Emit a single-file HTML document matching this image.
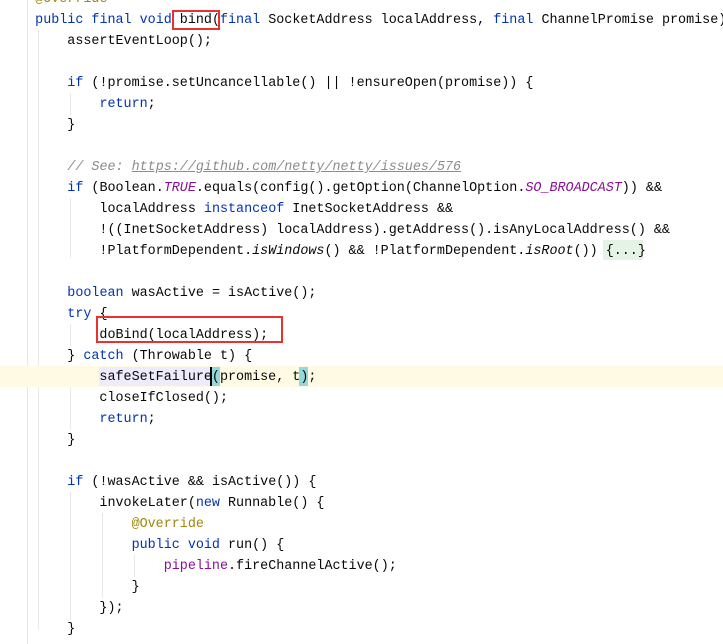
<!DOCTYPE html>
<html><head><style>
body{margin:0;width:723px;height:644px;background:#fff;overflow:hidden;position:relative;font-family:"Liberation Mono",monospace;font-size:13.4px;color:#080808}
.l{position:absolute;left:3px;height:21px;line-height:21px;white-space:pre;margin-top:1px}
.k{color:#0033b3}.a{color:#9e880d}.c{color:#8c8c8c;font-style:italic}.u{text-decoration:underline}
.s{color:#871094;font-style:italic}.i{font-style:italic}.p{color:#871094}
.g{position:absolute;width:1px;background:#e8e8e8}
.box{position:absolute;border:2px solid #e8322f;box-sizing:border-box}
</style></head><body>
<div class="g" style="left:27px;top:0;height:644px"></div>
<div class="g" style="left:38px;top:30px;height:600px"></div>
<div class="g" style="left:70px;top:93px;height:22px"></div>
<div class="g" style="left:70px;top:198px;height:60px"></div>
<div class="g" style="left:70px;top:324px;height:22px"></div>
<div class="g" style="left:70px;top:366px;height:64px"></div>
<div class="g" style="left:70px;top:492px;height:128px"></div>
<div class="g" style="left:102px;top:513px;height:85px"></div>
<div class="g" style="left:134px;top:555px;height:22px"></div>
<div style="position:absolute;left:0;top:366px;width:723px;height:21px;background:#fffae3"></div>
<div style="position:absolute;left:99px;top:367px;width:112px;height:19px;background:#edebfc"></div>
<div style="position:absolute;left:211px;top:367px;width:9px;height:19px;background:#93d9d9"></div>
<div style="position:absolute;left:299px;top:367px;width:9px;height:19px;background:#93d9d9"></div>
<div style="position:absolute;left:210px;top:367px;width:2px;height:19px;background:#000"></div>
<div style="position:absolute;left:603px;top:240px;width:40px;height:20px;background:#e5f3e6"></div>
<div class="l" style="top:-12px">    <span class="a">@Override</span></div>
<div class="l" style="top:9px">    <span class="k">public final void</span> bind(<span class="k">final</span> SocketAddress localAddress, <span class="k">final</span> ChannelPromise promise) {</div>
<div class="l" style="top:30px">        assertEventLoop();</div>
<div class="l" style="top:72px">        <span class="k">if</span> (!promise.setUncancellable() || !ensureOpen(promise)) {</div>
<div class="l" style="top:93px">            <span class="k">return</span>;</div>
<div class="l" style="top:114px">        }</div>
<div class="l" style="top:156px">        <span class="c">// See: <span class="u">https://github.com/netty/netty/issues/576</span></span></div>
<div class="l" style="top:177px">        <span class="k">if</span> (Boolean.<span class="s">TRUE</span>.equals(config().getOption(ChannelOption.<span class="s">SO_BROADCAST</span>)) &amp;&amp;</div>
<div class="l" style="top:198px">            localAddress <span class="k">instanceof</span> InetSocketAddress &amp;&amp;</div>
<div class="l" style="top:219px">            !((InetSocketAddress) localAddress).getAddress().isAnyLocalAddress() &amp;&amp;</div>
<div class="l" style="top:240px">            !PlatformDependent.<span class="i">isWindows</span>() &amp;&amp; !PlatformDependent.<span class="i">isRoot</span>()) {...}</div>
<div class="l" style="top:282px">        <span class="k">boolean</span> wasActive = isActive();</div>
<div class="l" style="top:303px">        <span class="k">try</span> {</div>
<div class="l" style="top:324px">            doBind(localAddress);</div>
<div class="l" style="top:345px">        } <span class="k">catch</span> (Throwable t) {</div>
<div class="l" style="top:366px">            safeSetFailure(promise, t);</div>
<div class="l" style="top:387px">            closeIfClosed();</div>
<div class="l" style="top:408px">            <span class="k">return</span>;</div>
<div class="l" style="top:429px">        }</div>
<div class="l" style="top:471px">        <span class="k">if</span> (!wasActive &amp;&amp; isActive()) {</div>
<div class="l" style="top:492px">            invokeLater(<span class="k">new</span> Runnable() {</div>
<div class="l" style="top:513px">                <span class="a">@Override</span></div>
<div class="l" style="top:534px">                <span class="k">public void</span> run() {</div>
<div class="l" style="top:555px">                    <span class="p">pipeline</span>.fireChannelActive();</div>
<div class="l" style="top:576px">                }</div>
<div class="l" style="top:597px">            });</div>
<div class="l" style="top:618px">        }</div>
<div class="box" style="left:172px;top:10px;width:48px;height:20px"></div>
<div class="box" style="left:96px;top:316px;width:187px;height:27px"></div>
</body></html>
